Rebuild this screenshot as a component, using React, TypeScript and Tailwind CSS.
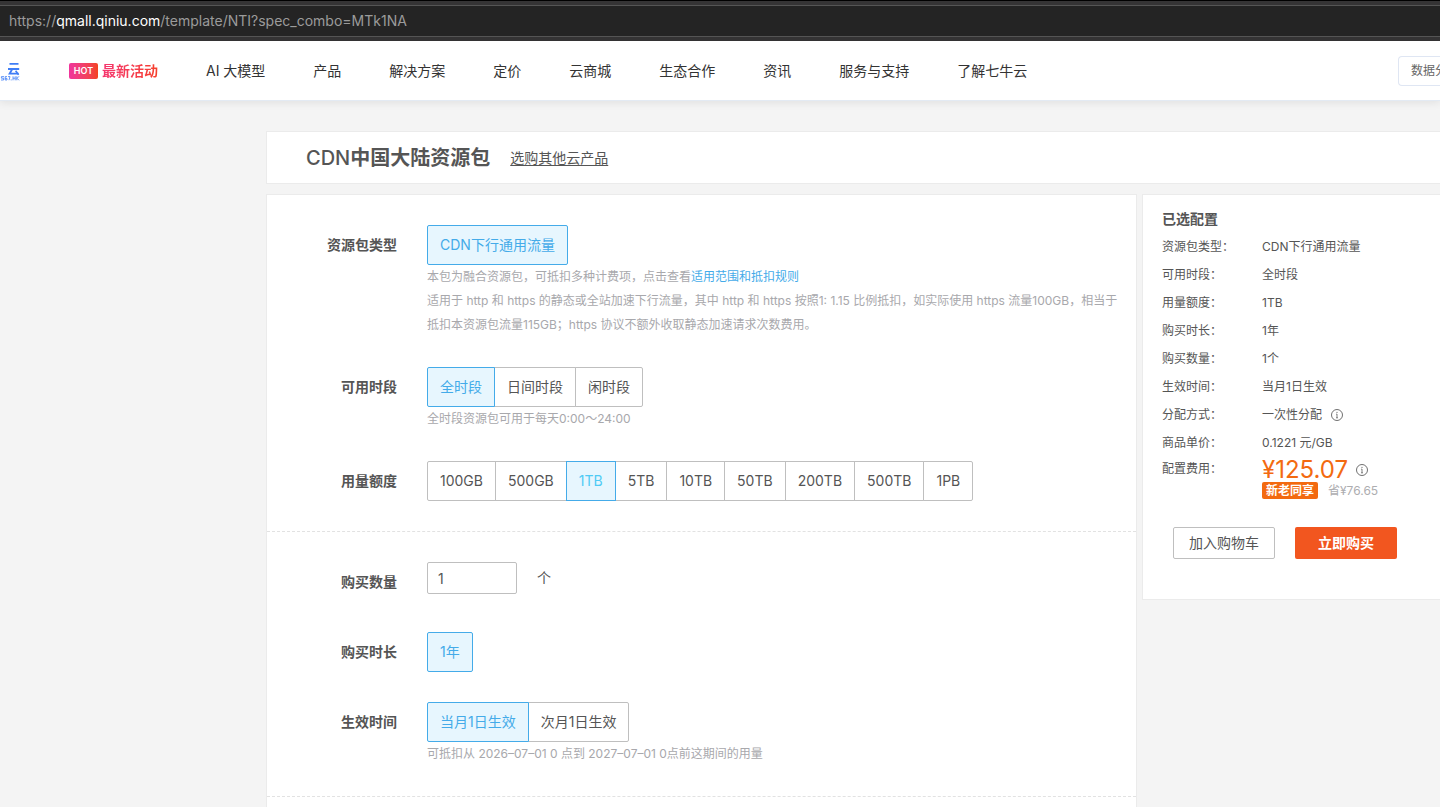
import { useState } from "react";

type GroupProps = {
  id: string;
  label: string;
  options: string[];
  initial: string;
  activeText?: string;
  children?: React.ReactNode;
};

const labelClass =
  "w-[130px] shrink-0 text-right text-sm leading-10 font-bold text-[#555]";

function OptionRow({
  id,
  label,
  options,
  initial,
  activeText = "text-[#44abe9]",
  children,
}: GroupProps) {
  const [selected, setSelected] = useState(initial);
  return (
    <div className="flex gap-[30px]">
      <span id={id} className={labelClass}>
        {label}
      </span>
      <div className="min-w-0 flex-1">
        <div role="group" aria-labelledby={id} className="flex">
          {options.map((option) => (
            <button
              key={option}
              type="button"
              aria-pressed={option === selected}
              onClick={() => setSelected(option)}
              className={
                "-ml-px h-10 border px-3 text-sm whitespace-nowrap first:ml-0 first:rounded-l-xs last:rounded-r-xs " +
                (option === selected
                  ? "relative border-[#44abe9] bg-[#e7f6fe] " + activeText
                  : "border-[#bfbfbf] bg-white text-[#555]")
              }
            >
              {option}
            </button>
          ))}
        </div>
        {children}
      </div>
    </div>
  );
}

function Hint({ children }: { children: React.ReactNode }) {
  return <p className="pr-2.5 text-xs leading-6 text-[#a8a8ac]">{children}</p>;
}

function InfoIcon() {
  return (
    <svg
      viewBox="0 0 12 12"
      className="size-3 shrink-0 text-[#606060]"
      fill="none"
      stroke="currentColor"
      strokeWidth="0.9"
      aria-hidden="true"
    >
      <circle cx="6" cy="6" r="5.5" />
      <path d="M6 5v3.7M5.2 5.1H6M5 8.8h2" strokeWidth="0.8" />
      <circle cx="6" cy="3.3" r="0.6" fill="currentColor" stroke="none" />
    </svg>
  );
}

function Logo() {
  return (
    <a href="#" aria-label="七牛云" className="flex w-5 shrink-0 flex-col">
      <svg viewBox="0 0 20 20" className="h-5 w-5" fill="none" stroke="#3f7df6">
        <path d="M9.5 2.8h9M8 8h11.2" strokeWidth="1.8" />
        <path d="M12 8.5l-2.4 4.2h8.9" strokeWidth="1.8" />
        <path d="M15.6 9.8l3 3.9" strokeWidth="1.6" />
        <path
          d="M4 15.6H1.4v1.6H3.6v1.8H1M7 15.6H5.2v3.4H7v-1.6H5.2M8 15.6h2l-1 3.6M11.2 18.4v1M13 15.3v4M15.2 15.3v4M13 17.2h2.2M16.8 15.3v4M19 15.3l-2 2 2 2"
          strokeWidth="0.8"
        />
      </svg>
    </a>
  );
}

const navItems = [
  "AI 大模型",
  "产品",
  "解决方案",
  "定价",
  "云商城",
  "生态合作",
  "资讯",
  "服务与支持",
  "了解七牛云",
];

const summary: [string, string][] = [
  ["资源包类型：", "CDN下行通用流量"],
  ["可用时段：", "全时段"],
  ["用量额度：", "1TB"],
  ["购买时长：", "1年"],
  ["购买数量：", "1个"],
  ["生效时间：", "当月1日生效"],
  ["分配方式：", "一次性分配"],
  ["商品单价：", "0.1221 元/GB"],
];

const capacities = [
  "100GB",
  "500GB",
  "1TB",
  "5TB",
  "10TB",
  "50TB",
  "200TB",
  "500TB",
  "1PB",
];

export default function App() {
  const [quantity, setQuantity] = useState("1");

  return (
    <div className="flex min-h-screen flex-col overflow-x-hidden bg-[#f4f4f4] font-['Inter','Noto_Sans_CJK_SC',sans-serif] text-[#555]">
      <div className="border-t border-black bg-[#353435] py-1">
        <div className="flex h-8 items-center border-y border-[#555] bg-[#242424] px-[9px] text-sm text-[#9b9b9b]">
          <span>
            https://<span className="text-white">qmall.qiniu.com</span>
            /template/NTI?spec_combo=MTk1NA
          </span>
        </div>
      </div>

      <header className="relative flex h-[60px] items-center border-b border-[#e3eaf3] bg-white shadow-[0_2px_8px_rgba(0,0,0,0.08)]">
        <Logo />
        <nav className="ml-[49px] flex flex-1 items-center gap-12 text-sm whitespace-nowrap text-[#333]">
          <a href="#" className="flex items-center gap-1 font-bold">
            <span className="flex h-4 w-[29px] items-center justify-center rounded-xs bg-linear-to-r from-[#f0349c] to-[#f4431c] text-[9px] leading-4 font-semibold text-white">
              HOT
            </span>
            <span className="bg-linear-to-r from-[#f5366f] to-[#f6402a] bg-clip-text text-transparent">
              最新活动
            </span>
          </a>
          {navItems.map((item) => (
            <a key={item} href="#">
              {item}
            </a>
          ))}
        </nav>
        <input
          type="text"
          aria-label="搜索"
          placeholder="数据分"
          className="h-[30px] w-[42px] rounded-l-sm border border-r-0 border-[#dfe6f3] bg-white pl-3 text-xs outline-none placeholder:text-[#666]"
        />
      </header>

      <main className="mt-[30px] ml-[266px] flex flex-1 flex-col gap-2.5">
        <div className="flex h-[53px] items-center gap-5 border border-r-0 border-[#ebebeb] bg-white pl-[39px]">
          <h1 className="text-xl font-medium">
            CDN<span className="font-bold">中国大陆资源包</span>
          </h1>
          <a href="#" className="text-sm underline underline-offset-2">
            选购其他云产品
          </a>
        </div>

        <div className="flex flex-1 items-start gap-[5px]">
          <div className="min-w-0 flex-1 self-stretch border border-b-0 border-[#ebebeb] bg-white">
            <section className="flex flex-col gap-[30px] border-b border-dashed border-[#e2e2e2] py-[30px]">
              <OptionRow
                id="pack-type"
                label="资源包类型"
                options={["CDN下行通用流量"]}
                initial="CDN下行通用流量"
              >
                <Hint>
                  本包为融合资源包，可抵扣多种计费项，点击查看
                  <a href="#" className="text-[#44abe9]">
                    适用范围和抵扣规则
                  </a>
                  <br />
                  适用于 http 和 https 的静态或全站加速下行流量，其中 http 和
                  https 按照1: 1.15 比例抵扣，如实际使用 https
                  流量100GB，相当于抵扣本资源包流量115GB；https
                  协议不额外收取静态加速请求次数费用。
                </Hint>
              </OptionRow>
              <OptionRow
                id="period"
                label="可用时段"
                options={["全时段", "日间时段", "闲时段"]}
                initial="全时段"
              >
                <Hint>全时段资源包可用于每天0:00～24:00</Hint>
              </OptionRow>
              <OptionRow
                id="capacity"
                label="用量额度"
                options={capacities}
                initial="1TB"
                activeText="text-[#4fcbf5]"
              />
            </section>

            <section className="flex flex-col gap-[30px] border-b border-dashed border-[#e2e2e2] py-[30px]">
              <div className="flex gap-[30px]">
                <label htmlFor="quantity" className={labelClass}>
                  购买数量
                </label>
                <div className="flex h-8 items-center gap-5 text-sm">
                  <input
                    id="quantity"
                    type="text"
                    inputMode="numeric"
                    value={quantity}
                    onChange={(event) => setQuantity(event.target.value)}
                    className="h-8 w-[90px] rounded-xs border border-[#bfbfbf] bg-white px-2.5 outline-none"
                  />
                  <span>个</span>
                </div>
              </div>
              <OptionRow
                id="duration"
                label="购买时长"
                options={["1年"]}
                initial="1年"
              />
              <OptionRow
                id="effective"
                label="生效时间"
                options={["当月1日生效", "次月1日生效"]}
                initial="当月1日生效"
              >
                <Hint>
                  可抵扣从 2026–07–01 0 点到 2027–07–01 0点前这期间的用量
                </Hint>
              </OptionRow>
            </section>
          </div>

          <aside className="w-[298px] shrink-0 border border-r-0 border-[#ebebeb] bg-white pt-3 pb-10 pl-[19px]">
            <h2 className="mb-0.5 text-sm leading-6 font-bold">已选配置</h2>
            <dl className="text-xs">
              {summary.map(([name, value]) => (
                <div key={name} className="flex h-7 items-center">
                  <dt className="w-[100px]">{name}</dt>
                  <dd className="flex items-center gap-[9px]">
                    {value}
                    {name === "分配方式：" && <InfoIcon />}
                  </dd>
                </div>
              ))}
              <div className="flex">
                <dt className="w-[100px] leading-6">配置费用：</dt>
                <dd>
                  <div className="flex h-[25px] items-center gap-2">
                    <span className="text-2xl text-[#f36a10]">¥125.07</span>
                    <InfoIcon />
                  </div>
                  <div className="flex items-center gap-2.5 text-[#adadb0]">
                    <span className="flex h-[17px] items-center rounded-xs bg-[#f36a10] px-1 font-bold text-white">
                      新老同享
                    </span>
                    省¥76.65
                  </div>
                </dd>
              </div>
            </dl>
            <div className="mt-7 flex gap-5 pl-[11px] text-sm">
              <button
                type="button"
                className="h-8 w-[102px] rounded-xs border border-[#bfbfbf] bg-white"
              >
                加入购物车
              </button>
              <button
                type="button"
                className="h-8 w-[102px] rounded-xs bg-[#f2561f] font-bold text-white"
              >
                立即购买
              </button>
            </div>
          </aside>
        </div>
      </main>
    </div>
  );
}
